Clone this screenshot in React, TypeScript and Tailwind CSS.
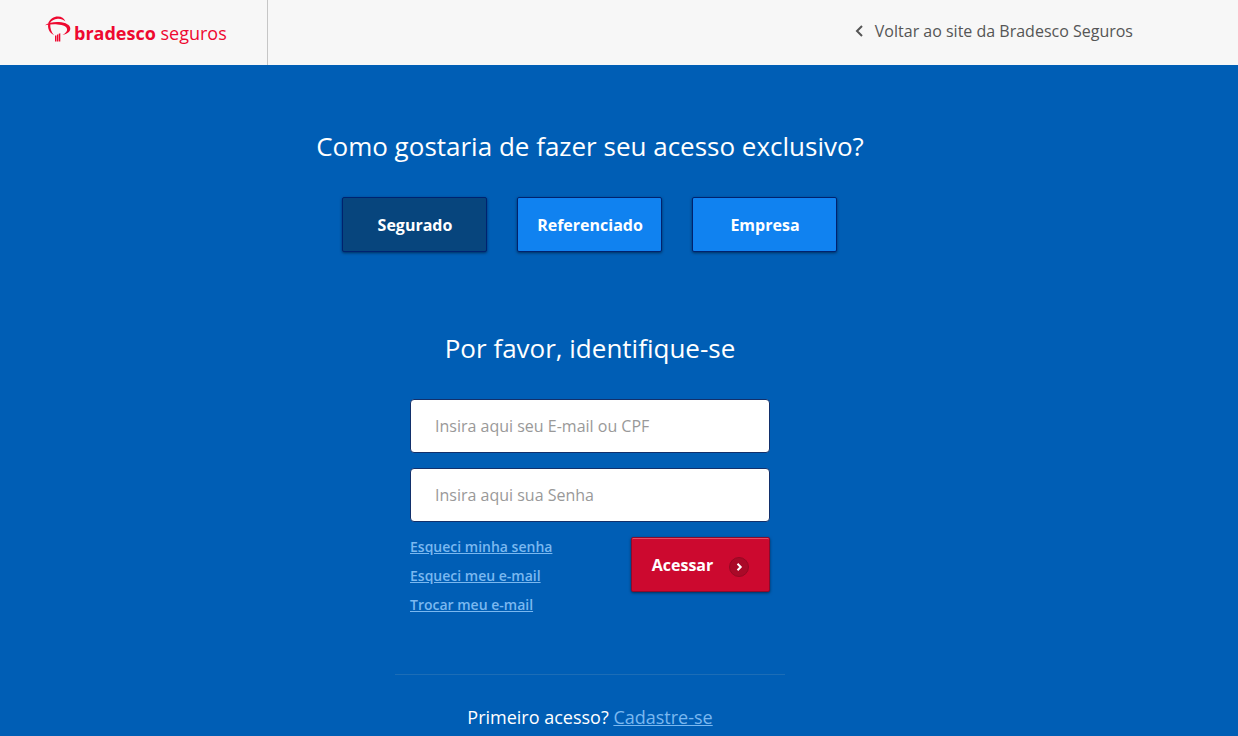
import { useState } from 'react';

const profiles = ['Segurado', 'Referenciado', 'Empresa'];
const helpLinks = ['Esqueci minha senha', 'Esqueci meu e-mail', 'Trocar meu e-mail'];

export default function App() {
  return (
    <div className="min-h-screen bg-[#005eb5] font-['Open_Sans',sans-serif] text-white">
      <Header />
      <main className="max-w-[1180px] px-4 pt-[63px] pb-2 flex flex-col items-center">
        <ProfilePicker />
        <LoginForm />
        <hr className="mt-[59px] w-full max-w-[390px] border-t border-[#1c6db6]" />
        <p className="mt-7 text-lg leading-7">
          Primeiro acesso?{' '}
          <a href="#" className="text-[#7ab8f0] underline">
            Cadastre-se
          </a>
        </p>
      </main>
    </div>
  );
}

function Header() {
  return (
    <header className="h-[65px] bg-[#f7f7f7] flex items-stretch">
      <a href="#" className="w-[268px] pl-[45px] border-r border-[#c6c6c6] flex items-center gap-[3px] text-[#ee0930]">
        <BradescoMark />
        <span className="text-lg leading-6 whitespace-nowrap">
          <b>bradesco</b> seguros
        </span>
      </a>
      <div className="flex-1 max-w-[865px] flex items-center justify-end">
        <a href="#" className="pb-1 flex items-center gap-3 text-[#555555]">
          <svg className="w-2 h-3" viewBox="0 0 8 12" fill="none" stroke="currentColor" strokeWidth="2">
            <path d="M7 1 2 6l5 5" />
          </svg>
          <span>Voltar ao site da Bradesco Seguros</span>
        </a>
      </div>
    </header>
  );
}

function BradescoMark() {
  return (
    <svg className="w-[26px] h-[26px] mb-2" viewBox="0 0 26 26" fill="currentColor" aria-hidden="true">
      <path d="M3 7.500C5 2.800 9 .4 13 .5c3.600.1 6 1.800 7.400 4.900C18 3.400 15.500 2.600 12.800 2.800 9 3.100 6.300 4.700 4.800 7.500Z" />
      <path d="M0 9.300C3.500 6.600 8.500 5.700 14 6c7 .5 11.300 3 11.300 6.500 0 3.200-3 5.500-7.800 6.300 3-1.400 4.700-3.300 4.600-5.300C22 10.500 18.500 8.800 12.500 8.400 8 8.100 4 8.400 0 9.300Z" />
      <path d="M3.200 8c-.7 4.600 1 8.400 5.800 11.200C6.300 16.200 5 12.400 5.300 7.800Z" />
      <path d="M10 19.500h1.500V25.500H10ZM12 18.500h1.200v7H12ZM13.700 17.700l1.600-.4v8.200h-1.600Z" />
    </svg>
  );
}

function ProfilePicker() {
  const [active, setActive] = useState('Segurado');

  return (
    <section className="flex flex-col items-center gap-[33px]">
      <h1 className="text-[26px] leading-9 text-center">Como gostaria de fazer seu acesso exclusivo?</h1>
      <div className="flex flex-wrap justify-center gap-[30px]">
        {profiles.map((profile) => (
          <button
            key={profile}
            type="button"
            aria-pressed={active === profile}
            onClick={() => setActive(profile)}
            className={`w-[145px] h-[55px] rounded-xs border border-[#00226f] font-bold shadow-[0_1px_3px_#00000080] cursor-pointer ${
              active === profile ? 'bg-[#07457d]' : 'bg-[#1082f0]'
            }`}
          >
            {profile}
          </button>
        ))}
      </div>
    </section>
  );
}

function LoginForm() {
  return (
    <form className="mt-[78px] w-full max-w-[360px] flex flex-col gap-[15px]" onSubmit={(e) => e.preventDefault()}>
      <h2 className="mb-[18px] text-[26px] leading-9 text-center">Por favor, identifique-se</h2>
      <input
        type="text"
        aria-label="E-mail ou CPF"
        placeholder="Insira aqui seu E-mail ou CPF"
        className="h-[54px] px-6 rounded-sm border border-[#12306b] bg-white text-gray-800 placeholder:text-[#999999]"
      />
      <input
        type="password"
        aria-label="Senha"
        placeholder="Insira aqui sua Senha"
        className="h-[54px] px-6 rounded-sm border border-[#12306b] bg-white text-gray-800 placeholder:text-[#999999]"
      />
      <div className="flex items-start justify-between">
        <ul className="text-sm leading-5 font-semibold flex flex-col gap-[9px]">
          {helpLinks.map((label) => (
            <li key={label}>
              <a href="#" className="text-[#7ab8f0] underline">
                {label}
              </a>
            </li>
          ))}
        </ul>
        <button
          type="submit"
          className="w-[139px] h-[55px] rounded-xs border border-[#8c0b2c] bg-[#cc092f] shadow-[0_1px_3px_#00000080,inset_0_1px_0_#e64a63] flex items-center justify-center gap-4 font-bold cursor-pointer"
        >
          Acessar
          <span className="mt-1 size-5 rounded-full border border-[#960823] bg-[#a90a28] flex items-center justify-center">
            <svg className="size-2" viewBox="0 0 8 8" fill="none" stroke="currentColor" strokeWidth="2">
              <path d="M2.500.8 5.700 4 2.500 7.200" />
            </svg>
          </span>
        </button>
      </div>
    </form>
  );
}
